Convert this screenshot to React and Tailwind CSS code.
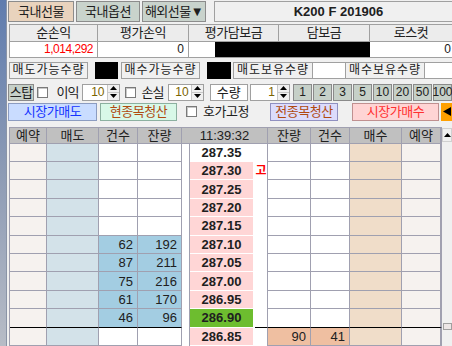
const prices = ["287.35", "287.30", "287.25", "287.20", "287.15", "287.10", "287.05", "287.00", "286.95", "286.90", "286.85"];
const sells = { 5: [62, 192], 6: [87, 211], 7: [75, 216], 8: [61, 170], 9: [46, 96] };
const qtyButtons = ["1", "2", "3", "5", "10", "20", "50", "100"];

const Check = ({ className }) => (
    <span className={`w-[11px] h-[11px] shrink-0 border border-[#7a7a7a] bg-white shadow-[inset_1px_1px_0_#c8c8c8] ${className}`} />
);

const Spin = ({ className, value }) => (
    <div className={`flex h-[17px] border border-[#a0a0a0] bg-white ${className}`}>
        <div className="flex-1 flex items-center justify-end pr-[2px] text-[12px] text-[#7a6400]">{value}</div>
        <div className="w-[12px] flex flex-col bg-[#f0f0f0] border-l border-[#c8c8c8]">
            <div className="flex-1 flex items-center justify-center border-b border-[#c8c8c8]">
                <svg width="7" height="4"><path d="M0 4 L3.5 0 L7 4Z" fill="#000" /></svg>
            </div>
            <div className="flex-1 flex items-center justify-center">
                <svg width="7" height="4"><path d="M0 0 L7 0 L3.5 4Z" fill="#000" /></svg>
            </div>
        </div>
    </div>
);

const Label = ({ className, children }) => (
    <div className={`h-full flex items-center justify-center border border-[#a0a0a0] bg-[#f0f0f0] text-[12px] tracking-[1px] ${className}`}>
        {children}
    </div>
);

const Tab = ({ className, children }) => (
    <div className={`h-full flex items-center justify-center border border-[#8c8c8c] text-[13px] tracking-[-0.5px] ${className}`}>
        {children}
    </div>
);

const Row = ({ i }) => {
    const bb = i === 9 ? "border-b-black" : "border-b-[#a0a0b0]";
    const cell = "h-full flex items-center justify-end pr-[4px] border-r border-b border-r-[#a0a0b0] text-[13px]";
    const sell = sells[i];
    const pbg = i === 0 ? "bg-white" : i === 9 ? "bg-[#6dbd2f]" : "bg-[#ffd6d6]";
    return (
        <div className="flex h-[18.4px]">
            <div className={`w-[37px] bg-[#f6f2ef] ${cell} ${bb}`} />
            <div className={`w-[52px] bg-[#d3e2e9] ${cell} ${bb}`} />
            <div className={`w-[39px] ${sell ? "bg-[#a3cde2]" : "bg-white"} ${cell} ${bb}`}>{sell && sell[0]}</div>
            <div className={`w-[44px] ${sell ? "bg-[#a3cde2]" : "bg-white"} ${cell} ${bb}`}>{sell && sell[1]}</div>
            <div className="w-[8px] h-full bg-white border-r border-r-[#a0a0b0]" />
            <div className="w-[65px] h-full bg-white border-b border-b-white flex">
                <div className={`w-[63px] h-full flex items-center justify-center text-[13px] font-bold ${pbg}`}>{prices[i]}</div>
            </div>
            <div className={`w-[13px] h-full bg-white border-r border-r-[#a0a0b0] flex items-center justify-center text-[12px] font-bold text-[#ff0000] ${i === 9 ? "border-b border-b-black" : ""}`}>
                {i === 1 ? "고" : ""}
            </div>
            <div className={`w-[43px] ${i === 10 ? "bg-[#efbfa1]" : "bg-white"} ${cell} ${bb}`}>{i === 10 ? 90 : ""}</div>
            <div className={`w-[39px] ${i === 10 ? "bg-[#efbfa1]" : "bg-white"} ${cell} ${bb}`}>{i === 10 ? 41 : ""}</div>
            <div className={`w-[52px] bg-[#f0ddc9] ${cell} ${bb}`} />
            <div className={`w-[40px] h-full bg-[#f6f2ef] border-r-2 border-b border-r-[#a0a0b0] ${bb}`} />
        </div>
    );
};

export default function App() {
    const head = "h-full flex items-center justify-center border-r border-b border-[#a0a0b0] text-[13px]";
    return (
        <div className="w-[452px] h-[346px] overflow-hidden flex bg-[#f0f0f0] text-[#202020] leading-none font-['Liberation_Sans','Noto_Sans_CJK_KR',sans-serif]">
            <div className="w-[7px] shrink-0 bg-linear-to-b from-[#5f7cae] via-[#8d9bb5] to-[#b7bcc6] border-r border-[#8a94a6]" />

            <div className="flex-1 min-w-0 flex flex-col pt-[1px]">
                {/* 상단 탭 */}
                <div className="flex h-[21px] pl-[1px]">
                    <Tab className="w-[66px] bg-[#e9d3bd]">국내선물</Tab>
                    <Tab className="ml-[2px] w-[64px] bg-[#c9d3cc]">국내옵션</Tab>
                    <Tab className="ml-[2px] w-[64px] bg-[#c9d3cc]">해외선물▼</Tab>
                    <div className="ml-[8px] flex-1 flex items-center justify-center pl-[10px] border border-r-0 border-[#a0a0a0] bg-[#f0f0f0] text-[13px] font-bold">
                        K200 F 201906
                    </div>
                </div>

                {/* 손익 */}
                <div className="mt-[2px] ml-[2px] flex flex-col text-[12px]">
                    <div className="flex h-[18px] border-t border-l border-[#a0a0a0] bg-[#ececec] text-[13px] tracking-[-0.5px]">
                        <div className="w-[88px] h-full flex items-center justify-center border-r border-b border-[#a0a0a0]">순손익</div>
                        <div className="w-[91px] h-full flex items-center justify-center border-r border-b border-[#a0a0a0]">평가손익</div>
                        <div className="w-[90px] h-full flex items-center justify-center border-r border-b border-[#a0a0a0]">평가담보금</div>
                        <div className="w-[91px] h-full flex items-center justify-center border-r border-b border-[#a0a0a0]">담보금</div>
                        <div className="flex-1 h-full flex items-center justify-center border-b border-[#a0a0a0]">로스컷</div>
                    </div>
                    <div className="flex h-[16px] border-l border-[#a0a0a0]">
                        <div className="w-[88px] h-full flex items-center justify-end pr-[4px] bg-white border-r border-b border-[#a0a0a0] text-[#ff0000] tracking-[-0.5px]">1,014,292</div>
                        <div className="w-[91px] h-full flex items-center justify-end pr-[4px] bg-white border-r border-b border-[#a0a0a0]">0</div>
                        <div className="w-[181px] h-full bg-white border-b border-[#a0a0a0] flex">
                            <div className="ml-[26px] w-[155px] h-full bg-black" />
                        </div>
                        <div className="flex-1 h-full flex items-center justify-end pr-[1px] bg-white border-b border-[#a0a0a0]">0</div>
                    </div>
                </div>

                {/* 수량 */}
                <div className="mt-[4px] ml-[2px] flex h-[17px]">
                    <Label className="w-[79px]">매도가능수량</Label>
                    <div className="ml-[7px] w-[23px] bg-black" />
                    <Label className="ml-[3px] w-[79px]">매수가능수량</Label>
                    <div className="ml-[7px] w-[24px] bg-black" />
                    <Label className="ml-[2px] w-[80px]">매도보유수량</Label>
                    <div className="w-[32px] bg-white border-y border-[#a0a0a0]" />
                    <Label className="w-[80px]">매수보유수량</Label>
                    <div className="flex-1 bg-white border-y border-[#a0a0a0]" />
                </div>

                {/* 스탑 */}
                <div className="mt-[5px] flex items-center h-[17px] text-[13px]">
                    <div className="ml-[1px] w-[27px] h-full flex items-center justify-center bg-[#c6d0c8] border border-[#8a8a8a] text-[13px] tracking-[-0.5px]">스탑</div>
                    <Check className="ml-[3px]" />
                    <span className="ml-[8px] w-[22px] whitespace-nowrap tracking-[-1px]">이익</span>
                    <Spin className="ml-[4px] w-[38px]" value="10" />
                    <Check className="ml-[5px]" />
                    <span className="ml-[6px] w-[22px] whitespace-nowrap tracking-[-1px]">손실</span>
                    <Spin className="ml-[5px] w-[36px]" value="10" />
                    <div className="ml-[6px] w-[39px] h-full flex items-center justify-center bg-white border border-[#a0a0a0]">수량</div>
                    <Spin className="ml-[2px] w-[41px]" value="1" />
                    <div className="ml-[3px] flex gap-[1px] h-full">
                        {qtyButtons.map((q) => (
                            <div key={q} className="w-[19px] shrink-0 h-full flex items-center justify-center bg-[#c6d0c8] border border-[#8a8a8a] text-[12px]">
                                {q}
                            </div>
                        ))}
                    </div>
                </div>

                {/* 주문 버튼 */}
                <div className="mt-[2px] flex items-center h-[18px] text-[13px] tracking-[-0.5px]">
                    <div className="ml-[1px] w-[89px] h-full flex items-center justify-center bg-[#c9dcff] border border-[#8c9cc0] text-[#1433ff]">시장가매도</div>
                    <div className="ml-[3px] w-[77px] h-full flex items-center justify-center bg-[#d8f8e8] border border-[#8cb0a0] text-[#b04a10]">현종목청산</div>
                    <Check className="ml-[9px]" />
                    <span className="ml-[6px] w-[48px] whitespace-nowrap">호가고정</span>
                    <div className="ml-[19px] w-[68px] h-full flex items-center justify-center bg-[#dcdcfc] border border-[#9090c0] text-[#b04a10]">전종목청산</div>
                    <div className="ml-[14px] w-[87px] h-full flex items-center justify-center bg-[#ffd4d4] border border-[#c09090] text-[#ff3030]">시장가매수</div>
                    <div className="ml-[2px] flex-1 h-full flex items-center justify-center bg-[#ffa000]">
                        <svg width="8" height="9"><path d="M0 4.5 L8 0 L8 9Z" fill="#000" /></svg>
                    </div>
                </div>

                {/* 호가 */}
                <div className="mt-[6px] flex">
                    <div className="ml-[2px] w-[433px] shrink-0 flex flex-col border-l border-t border-[#a0a0b0]">
                        <div className="flex h-[16px] bg-[#c0c0c0]">
                            <div className={`w-[37px] ${head}`}>예약</div>
                            <div className={`w-[52px] ${head}`}>매도</div>
                            <div className={`w-[39px] ${head}`}>건수</div>
                            <div className={`w-[44px] ${head}`}>잔량</div>
                            <div className={`w-[86px] ${head} text-[12px]`}>11:39:32</div>
                            <div className={`w-[43px] ${head}`}>잔량</div>
                            <div className={`w-[39px] ${head}`}>건수</div>
                            <div className={`w-[52px] ${head}`}>매수</div>
                            <div className="w-[40px] h-full flex items-center justify-center border-r-2 border-b border-[#a0a0b0] text-[13px]">예약</div>
                        </div>
                        {prices.map((p, i) => (
                            <Row key={p} i={i} />
                        ))}
                    </div>
                    <div className="flex-1 flex flex-col">
                        <div className="mt-[1px] h-[14px] flex items-center justify-center bg-[#f0f0f0] border border-[#d0d0d0]">
                            <svg width="7" height="4"><path d="M0 4 L3.5 0 L7 4Z" fill="#000" /></svg>
                        </div>
                        <div className="mt-[181px] ml-[1px] h-[7px] bg-[#ece6e6] border border-[#a0a0a0]" />
                    </div>
                </div>
            </div>
        </div>
    );
}
